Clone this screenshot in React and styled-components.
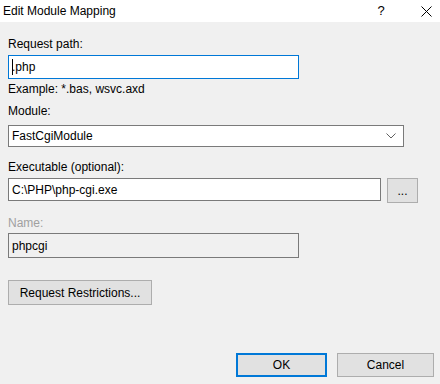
import React from "react";
import styled, { createGlobalStyle } from "styled-components";

const GlobalStyle = createGlobalStyle`
  html, body {
    margin: 0;
    padding: 0;
    background: #f0f0f0;
  }
  body {
    font-family: "Segoe UI", "Liberation Sans", Arial, sans-serif;
    font-size: 12px;
    color: #000;
  }
  * {
    box-sizing: border-box;
  }
`;

const Window = styled.div`
  width: 440px;
  height: 384px;
  background: #f0f0f0;
  display: flex;
  flex-direction: column;
  overflow: hidden;
`;

const TitleBar = styled.div`
  height: 22px;
  background: #fff;
  display: flex;
  align-items: center;
  padding-left: 3px;
`;

const Title = styled.div`
  flex: 1;
  font-size: 12px;
  line-height: 16px;
`;

const TitleButton = styled.div`
  width: ${(p) => p.$w}px;
  margin-right: ${(p) => p.$mr || 0}px;
  display: flex;
  justify-content: center;
  align-items: center;
  font-size: 13px;
  line-height: 16px;
  color: #000;
`;

const Body = styled.div`
  flex: 1;
  display: flex;
  flex-direction: column;
  padding: 0 6px 0 8px;
`;

const Label = styled.div`
  line-height: 16px;
  height: 16px;
  margin-top: ${(p) => p.$top || 0}px;
  color: ${(p) => (p.$disabled ? "#a0a0a0" : "#000")};
`;

const TextBox = styled.div`
  position: relative;
  width: ${(p) => p.$w}px;
  height: ${(p) => p.$h}px;
  margin-top: ${(p) => p.$top || 0}px;
  border: 1px solid ${(p) => (p.$focused ? "#0078d7" : "#7a7a7a")};
  background: ${(p) => (p.$disabled ? "#f0f0f0" : "#fff")};
  display: flex;
  align-items: center;
  padding-left: 3px;
  line-height: 16px;
`;

const Caret = styled.span`
  position: absolute;
  left: 3px;
  top: 3px;
  width: 1px;
  height: 16px;
  background: #000;
`;

const Select = styled.div`
  width: 396px;
  height: 22px;
  margin-top: ${(p) => p.$top || 0}px;
  border: 1px solid #7a7a7a;
  background: #fff;
  display: flex;
  align-items: center;
  justify-content: space-between;
  padding: 0 7px 0 3px;
  line-height: 16px;
`;

const Row = styled.div`
  display: flex;
  align-items: flex-start;
  gap: 6px;
  margin-top: ${(p) => p.$top || 0}px;
`;

const Button = styled.button`
  font-family: inherit;
  font-size: 12px;
  color: #000;
  width: ${(p) => p.$w}px;
  height: ${(p) => p.$h}px;
  margin-top: ${(p) => p.$top || 0}px;
  background: #e1e1e1;
  border: ${(p) => (p.$default ? "2px solid #0078d7" : "1px solid #adadad")};
  border-radius: 0;
  padding: 0;
  display: flex;
  align-items: center;
  justify-content: center;
  line-height: 16px;
`;

const Footer = styled.div`
  display: flex;
  justify-content: flex-end;
  gap: 10px;
  margin-top: 48px;
`;

const Chevron = () => (
  <svg width="10" height="6" viewBox="0 0 10 6">
    <path d="M0.5 0.5 L5 5 L9.5 0.5" fill="none" stroke="#606060" strokeWidth="1" />
  </svg>
);

const CloseIcon = () => (
  <svg width="11" height="11" viewBox="0 0 11 11">
    <path d="M0.5 0.5 L10.5 10.5 M10.5 0.5 L0.5 10.5" fill="none" stroke="#000" strokeWidth="1" />
  </svg>
);

const App = () => {
  return (
    <>
      <GlobalStyle />
      <Window>
        <TitleBar>
          <Title>Edit Module Mapping</Title>
          <TitleButton $w={22} $mr={20}>?</TitleButton>
          <TitleButton $w={28}>
            <CloseIcon />
          </TitleButton>
        </TitleBar>
        <Body>
          <Label $top={14}>Request path:</Label>
          <TextBox $w={291} $h={24} $top={3} $focused>
            <Caret />
            .php
          </TextBox>
          <Label $top={2}>Example: *.bas, wsvc.axd</Label>
          <Label $top={6}>Module:</Label>
          <Select $top={6}>
            <span>FastCgiModule</span>
            <Chevron />
          </Select>
          <Label $top={12}>Executable (optional):</Label>
          <Row $top={3}>
            <TextBox $w={373} $h={23}>
              C:\PHP\php-cgi.exe
            </TextBox>
            <Button $w={31} $h={25}>
              ...
            </Button>
          </Row>
          <Label $top={12} $disabled>
            Name:
          </Label>
          <TextBox $w={291} $h={25} $top={2} $disabled>
            phpcgi
          </TextBox>
          <Button $w={144} $h={25} $top={22}>
            Request Restrictions...
          </Button>
          <Footer>
            <Button $w={91} $h={24} $default>
              OK
            </Button>
            <Button $w={97} $h={24}>
              Cancel
            </Button>
          </Footer>
        </Body>
      </Window>
    </>
  );
};

export default App;
